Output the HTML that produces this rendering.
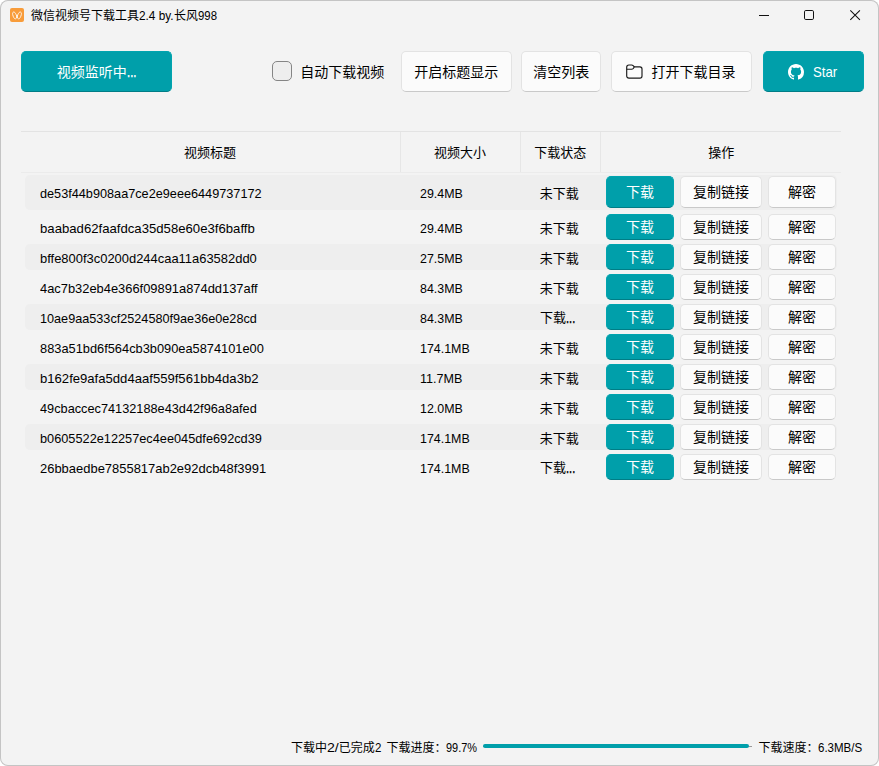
<!DOCTYPE html>
<html lang="zh-CN">
<head>
<meta charset="utf-8">
<title>微信视频号下载工具2.4 by.长风998</title>
<!-- CJK labels are real text (.c) using a Liberation Sans + Noto Sans CJK SC stack. -->
<style>
html,body{margin:0;padding:0;background:#fff}
body{width:879px;height:766px;overflow:hidden;position:relative;font-family:"Liberation Sans","Noto Sans CJK SC",sans-serif;color:#000}
.win{position:absolute;left:0;top:0;width:879px;height:765.5px;border-radius:8px;background:#f3f3f3;box-shadow:inset 0 0 0 1px #c4c4c4;overflow:hidden}
.win *{position:absolute;margin:0;padding:0;font-weight:400;font-style:normal}
.win svg *{position:static}
.g{left:0;top:0;width:0;height:0;overflow:visible}
.t{transform-origin:0 0;white-space:nowrap;line-height:16px;height:16px}
.c{font-family:"Liberation Sans","Noto Sans CJK SC",sans-serif;color:#000;overflow:visible}
.pbtn .c{color:#fff}
.btn{box-sizing:border-box;background:#fbfbfb;border:1px solid #e3e3e3;border-bottom-color:#c9c9c9;border-radius:5px}
.pbtn{box-sizing:border-box;background:#009faa;border:1px solid #00a4af;border-bottom-color:#007d86;border-radius:5px}
.chk{box-sizing:border-box;background:#eee;border:1px solid #858585;border-radius:5px}
.alt{background:#eee;border-radius:5px}
.hl{background:#e3e3e3}
.vl{background:#e6e6e6}
</style>
</head>
<body>
<div class="win">
<header class="g titlebar">
<svg class="ic" style="left:10px;top:8px" width="14" height="14" viewBox="0 0 14 14" role="img" aria-label="app icon"><rect width="14" height="14" rx="2" fill="#f89c3a"/><path d="M7 9.2C6.4 10.6 5.2 11.2 4.4 10.6C3.2 9.7 1.9 6.2 2.1 4.6C2.3 3.2 3.6 2.7 4.6 3.8C5.6 4.9 6.6 7 7 9.2C7.4 7 8.4 4.9 9.4 3.8C10.4 2.7 11.7 3.2 11.9 4.6C12.1 6.2 10.8 9.7 9.6 10.6C8.8 11.2 7.6 10.6 7 9.2Z" transform="translate(7 7.4) scale(.9) translate(-7 -7)" fill="none" stroke="#fff" stroke-width="0.95" stroke-linecap="round" stroke-linejoin="round"/><path d="M7 7.2V9" stroke="#fff" stroke-width="0.8" stroke-linecap="round"/></svg>
<h1 class="g title">
<span class="t c" style="left:31px;top:8.14px;font-size:12px;width:108px">微信视频号下载工具</span>
<span class="t" style="left:139px;top:7.5px;font-size:12.4px;transform:scaleX(0.9531);">2.4 by.</span>
<span class="t c" style="left:174px;top:8.14px;font-size:12px;width:24px">长风</span>
<span class="t" style="left:197.9px;top:7.5px;font-size:12.4px;transform:scaleX(0.9184);">998</span>
</h1>
<svg class="ic" style="left:755px;top:5px" width="110" height="20" viewBox="0 0 110 20" role="img" aria-label="minimize maximize close" fill="none" stroke="#111" stroke-width="1"><path d="M4 10.5h10"/><rect x="49.5" y="5.5" width="9" height="9" rx="1.3"/><path d="M95.3 5.3l9.6 9.6M104.9 5.3l-9.6 9.6" stroke-width="1.05"/></svg>
</header>
<div class="g toolbar">
<div class="pbtn" style="left:21px;top:51px;width:151px;height:41px;" role="button">
<span class="t c" style="left:34.8px;top:12.05px;font-size:14px;width:70px">视频监听中</span>
<span class="t" style="left:104.9px;top:11.28px;font-size:16.5px;color:#fff;-webkit-text-stroke:0.35px;transform:scaleX(0.6835);">...</span>
</div>
<label class="g check">
<span class="chk" style="left:272px;top:61px;width:20px;height:20px;" role="checkbox" aria-checked="false"></span>
<span class="t c" style="left:300.2px;top:64.45px;font-size:14px;width:84px">自动下载视频</span>
</label>
<div class="btn" style="left:401px;top:51px;width:111px;height:41px;" role="button">
<span class="t c" style="left:12.2px;top:12.05px;font-size:14px;width:84px">开启标题显示</span>
</div>
<div class="btn" style="left:521px;top:51px;width:80px;height:41px;" role="button">
<span class="t c" style="left:11.2px;top:12.05px;font-size:14px;width:56px">清空列表</span>
</div>
<div class="btn" style="left:611px;top:51px;width:141px;height:41px;" role="button">
<svg class="ic" style="left:13.5px;top:12px" width="17" height="15" viewBox="0 0 17 15" role="img" aria-label="folder" fill="none" stroke="#1a1a1a" stroke-width="1.15" stroke-linejoin="round"><path d="M0.7 3.2C0.7 1.9 1.6 1 2.9 1H5.6C6.2 1 6.7 1.2 7.1 1.6L8 2.5C8.3 2.8 8.6 2.9 9 2.9H13.9C15.1 2.9 16 3.8 16 5V12C16 13.2 15.1 14.1 13.9 14.1H2.9C1.6 14.1 0.7 13.2 0.7 12Z"/><path d="M0.7 5.2H5.6C6.2 5.2 6.7 5 7.1 4.6L8.3 3.2"/></svg>
<span class="t c" style="left:39.6px;top:12.05px;font-size:14px;width:84px">打开下载目录</span>
</div>
<div class="pbtn" style="left:763px;top:51px;width:101px;height:41px;" role="button">
<svg class="ic" style="left:24px;top:12px" width="16" height="16" viewBox="0 0 16 16" role="img" aria-label="GitHub"><path fill="#fff" d="M8 0C3.58 0 0 3.58 0 8c0 3.54 2.29 6.53 5.47 7.59.4.07.55-.17.55-.38 0-.19-.01-.82-.01-1.49-2.01.37-2.53-.49-2.69-.94-.09-.23-.48-.94-.82-1.13-.28-.15-.68-.52-.01-.53.63-.01 1.08.58 1.23.82.72 1.21 1.87.87 2.33.66.07-.52.28-.87.51-1.07-1.78-.2-3.64-.89-3.64-3.95 0-.87.31-1.59.82-2.15-.08-.2-.36-1.02.08-2.12 0 0 .67-.21 2.2.82.64-.18 1.32-.27 2-.27s1.36.09 2 .27c1.53-1.04 2.2-.82 2.2-.82.44 1.1.16 1.92.08 2.12.51.56.82 1.27.82 2.15 0 3.07-1.87 3.75-3.65 3.95.29.25.54.73.54 1.48 0 1.07-.01 1.93-.01 2.2 0 .21.15.46.55.38A8.01 8.01 0 0 0 16 8c0-4.42-3.58-8-8-8z"/></svg>
<span class="t" style="left:49.3px;top:12.38px;font-size:14.5px;color:#fff;transform:scaleX(0.9100);">Star</span>
</div>
</div>
<div class="g table" role="table">
<div class="g thead" role="row">
<i class="hl" style="left:21px;top:131px;width:820px;height:1px;"></i>
<i class="hl" style="left:21px;top:172px;width:820px;height:1px;background:#ebebeb"></i>
<i class="vl" style="left:400px;top:132px;width:1px;height:40px;"></i>
<i class="vl" style="left:520px;top:132px;width:1px;height:40px;"></i>
<i class="vl" style="left:600px;top:132px;width:1px;height:40px;"></i>
<div class="g th" role="columnheader">
<span class="t c" style="left:184px;top:145.2px;font-size:13px;width:52px">视频标题</span>
</div>
<div class="g th" role="columnheader">
<span class="t c" style="left:434px;top:145.2px;font-size:13px;width:52px">视频大小</span>
</div>
<div class="g th" role="columnheader">
<span class="t c" style="left:534.3px;top:145.2px;font-size:13px;width:52px">下载状态</span>
</div>
<div class="g th" role="columnheader">
<span class="t c" style="left:708.2px;top:145.2px;font-size:13px;width:26px">操作</span>
</div>
</div>
<div class="g row odd" role="row">
<i class="alt" style="left:25px;top:175px;width:811.5px;height:35px;"></i>
<div class="g td" role="cell">
<span class="t" style="left:40.4px;top:185.6px;font-size:12.7px;transform:scaleX(1.0001);">de53f44b908aa7ce2e9eee6449737172</span>
</div>
<div class="g td" role="cell">
<span class="t" style="left:420px;top:185.6px;font-size:12.7px;transform:scaleX(0.9779);">29.4MB</span>
</div>
<div class="g td" role="cell">
<span class="t c" style="left:539.7px;top:185.6px;font-size:13px;width:39px">未下载</span>
</div>
<div class="g td" role="cell">
<div class="pbtn" style="left:606px;top:176px;width:68px;height:32px;" role="button">
<span class="t c" style="left:19.1px;top:7.25px;font-size:14px;width:28px">下载</span>
</div>
<div class="btn" style="left:680px;top:176px;width:82px;height:32px;" role="button">
<span class="t c" style="left:12.1px;top:7.25px;font-size:14px;width:56px">复制链接</span>
</div>
<div class="btn" style="left:768px;top:176px;width:68px;height:32px;" role="button">
<span class="t c" style="left:19px;top:7.25px;font-size:14px;width:28px">解密</span>
</div>
</div>
</div>
<div class="g row" role="row">
<div class="g td" role="cell">
<span class="t" style="left:40.4px;top:220.6px;font-size:12.7px;transform:scaleX(1.0366);">baabad62faafdca35d58e60e3f6baffb</span>
</div>
<div class="g td" role="cell">
<span class="t" style="left:420px;top:220.6px;font-size:12.7px;transform:scaleX(0.9779);">29.4MB</span>
</div>
<div class="g td" role="cell">
<span class="t c" style="left:539.7px;top:220.6px;font-size:13px;width:39px">未下载</span>
</div>
<div class="g td" role="cell">
<div class="pbtn" style="left:606px;top:214px;width:68px;height:26px;" role="button">
<span class="t c" style="left:19.1px;top:4.25px;font-size:14px;width:28px">下载</span>
</div>
<div class="btn" style="left:680px;top:214px;width:82px;height:26px;" role="button">
<span class="t c" style="left:12.1px;top:4.25px;font-size:14px;width:56px">复制链接</span>
</div>
<div class="btn" style="left:768px;top:214px;width:68px;height:26px;" role="button">
<span class="t c" style="left:19px;top:4.25px;font-size:14px;width:28px">解密</span>
</div>
</div>
</div>
<div class="g row odd" role="row">
<i class="alt" style="left:25px;top:244px;width:811.5px;height:26px;"></i>
<div class="g td" role="cell">
<span class="t" style="left:40.4px;top:250.6px;font-size:12.7px;transform:scaleX(1.0196);">bffe800f3c0200d244caa11a63582dd0</span>
</div>
<div class="g td" role="cell">
<span class="t" style="left:420px;top:250.6px;font-size:12.7px;transform:scaleX(0.9779);">27.5MB</span>
</div>
<div class="g td" role="cell">
<span class="t c" style="left:539.7px;top:250.6px;font-size:13px;width:39px">未下载</span>
</div>
<div class="g td" role="cell">
<div class="pbtn" style="left:606px;top:244px;width:68px;height:26px;" role="button">
<span class="t c" style="left:19.1px;top:4.25px;font-size:14px;width:28px">下载</span>
</div>
<div class="btn" style="left:680px;top:244px;width:82px;height:26px;" role="button">
<span class="t c" style="left:12.1px;top:4.25px;font-size:14px;width:56px">复制链接</span>
</div>
<div class="btn" style="left:768px;top:244px;width:68px;height:26px;" role="button">
<span class="t c" style="left:19px;top:4.25px;font-size:14px;width:28px">解密</span>
</div>
</div>
</div>
<div class="g row" role="row">
<div class="g td" role="cell">
<span class="t" style="left:40.4px;top:280.6px;font-size:12.7px;transform:scaleX(1.0155);">4ac7b32eb4e366f09891a874dd137aff</span>
</div>
<div class="g td" role="cell">
<span class="t" style="left:420px;top:280.6px;font-size:12.7px;transform:scaleX(0.9779);">84.3MB</span>
</div>
<div class="g td" role="cell">
<span class="t c" style="left:539.7px;top:280.6px;font-size:13px;width:39px">未下载</span>
</div>
<div class="g td" role="cell">
<div class="pbtn" style="left:606px;top:274px;width:68px;height:26px;" role="button">
<span class="t c" style="left:19.1px;top:4.25px;font-size:14px;width:28px">下载</span>
</div>
<div class="btn" style="left:680px;top:274px;width:82px;height:26px;" role="button">
<span class="t c" style="left:12.1px;top:4.25px;font-size:14px;width:56px">复制链接</span>
</div>
<div class="btn" style="left:768px;top:274px;width:68px;height:26px;" role="button">
<span class="t c" style="left:19px;top:4.25px;font-size:14px;width:28px">解密</span>
</div>
</div>
</div>
<div class="g row odd" role="row">
<i class="alt" style="left:25px;top:304px;width:811.5px;height:26px;"></i>
<div class="g td" role="cell">
<span class="t" style="left:40.4px;top:310.6px;font-size:12.7px;transform:scaleX(0.9976);">10ae9aa533cf2524580f9ae36e0e28cd</span>
</div>
<div class="g td" role="cell">
<span class="t" style="left:420px;top:310.6px;font-size:12.7px;transform:scaleX(0.9779);">84.3MB</span>
</div>
<div class="g td" role="cell">
<span class="t c" style="left:540px;top:310.4px;font-size:13px;width:26px">下载</span>
<span class="t" style="left:566.2px;top:310.46px;font-size:16px;-webkit-text-stroke:0.35px;transform:scaleX(0.6899);">...</span>
</div>
<div class="g td" role="cell">
<div class="pbtn" style="left:606px;top:304px;width:68px;height:26px;" role="button">
<span class="t c" style="left:19.1px;top:4.25px;font-size:14px;width:28px">下载</span>
</div>
<div class="btn" style="left:680px;top:304px;width:82px;height:26px;" role="button">
<span class="t c" style="left:12.1px;top:4.25px;font-size:14px;width:56px">复制链接</span>
</div>
<div class="btn" style="left:768px;top:304px;width:68px;height:26px;" role="button">
<span class="t c" style="left:19px;top:4.25px;font-size:14px;width:28px">解密</span>
</div>
</div>
</div>
<div class="g row" role="row">
<div class="g td" role="cell">
<span class="t" style="left:40.4px;top:340.6px;font-size:12.7px;transform:scaleX(1.0105);">883a51bd6f564cb3b090ea5874101e00</span>
</div>
<div class="g td" role="cell">
<span class="t" style="left:420px;top:340.6px;font-size:12.7px;transform:scaleX(0.9797);">174.1MB</span>
</div>
<div class="g td" role="cell">
<span class="t c" style="left:539.7px;top:340.6px;font-size:13px;width:39px">未下载</span>
</div>
<div class="g td" role="cell">
<div class="pbtn" style="left:606px;top:334px;width:68px;height:26px;" role="button">
<span class="t c" style="left:19.1px;top:4.25px;font-size:14px;width:28px">下载</span>
</div>
<div class="btn" style="left:680px;top:334px;width:82px;height:26px;" role="button">
<span class="t c" style="left:12.1px;top:4.25px;font-size:14px;width:56px">复制链接</span>
</div>
<div class="btn" style="left:768px;top:334px;width:68px;height:26px;" role="button">
<span class="t c" style="left:19px;top:4.25px;font-size:14px;width:28px">解密</span>
</div>
</div>
</div>
<div class="g row odd" role="row">
<i class="alt" style="left:25px;top:364px;width:811.5px;height:26px;"></i>
<div class="g td" role="cell">
<span class="t" style="left:40.4px;top:370.6px;font-size:12.7px;transform:scaleX(1.0322);">b162fe9afa5dd4aaf559f561bb4da3b2</span>
</div>
<div class="g td" role="cell">
<span class="t" style="left:420px;top:370.6px;font-size:12.7px;transform:scaleX(0.9901);">11.7MB</span>
</div>
<div class="g td" role="cell">
<span class="t c" style="left:539.7px;top:370.6px;font-size:13px;width:39px">未下载</span>
</div>
<div class="g td" role="cell">
<div class="pbtn" style="left:606px;top:364px;width:68px;height:26px;" role="button">
<span class="t c" style="left:19.1px;top:4.25px;font-size:14px;width:28px">下载</span>
</div>
<div class="btn" style="left:680px;top:364px;width:82px;height:26px;" role="button">
<span class="t c" style="left:12.1px;top:4.25px;font-size:14px;width:56px">复制链接</span>
</div>
<div class="btn" style="left:768px;top:364px;width:68px;height:26px;" role="button">
<span class="t c" style="left:19px;top:4.25px;font-size:14px;width:28px">解密</span>
</div>
</div>
</div>
<div class="g row" role="row">
<div class="g td" role="cell">
<span class="t" style="left:40.4px;top:400.6px;font-size:12.7px;transform:scaleX(1.0042);">49cbaccec74132188e43d42f96a8afed</span>
</div>
<div class="g td" role="cell">
<span class="t" style="left:420px;top:400.6px;font-size:12.7px;transform:scaleX(0.9779);">12.0MB</span>
</div>
<div class="g td" role="cell">
<span class="t c" style="left:539.7px;top:400.6px;font-size:13px;width:39px">未下载</span>
</div>
<div class="g td" role="cell">
<div class="pbtn" style="left:606px;top:394px;width:68px;height:26px;" role="button">
<span class="t c" style="left:19.1px;top:4.25px;font-size:14px;width:28px">下载</span>
</div>
<div class="btn" style="left:680px;top:394px;width:82px;height:26px;" role="button">
<span class="t c" style="left:12.1px;top:4.25px;font-size:14px;width:56px">复制链接</span>
</div>
<div class="btn" style="left:768px;top:394px;width:68px;height:26px;" role="button">
<span class="t c" style="left:19px;top:4.25px;font-size:14px;width:28px">解密</span>
</div>
</div>
</div>
<div class="g row odd" role="row">
<i class="alt" style="left:25px;top:424px;width:811.5px;height:26px;"></i>
<div class="g td" role="cell">
<span class="t" style="left:40.4px;top:430.6px;font-size:12.7px;transform:scaleX(1.0047);">b0605522e12257ec4ee045dfe692cd39</span>
</div>
<div class="g td" role="cell">
<span class="t" style="left:420px;top:430.6px;font-size:12.7px;transform:scaleX(0.9797);">174.1MB</span>
</div>
<div class="g td" role="cell">
<span class="t c" style="left:539.7px;top:430.6px;font-size:13px;width:39px">未下载</span>
</div>
<div class="g td" role="cell">
<div class="pbtn" style="left:606px;top:424px;width:68px;height:26px;" role="button">
<span class="t c" style="left:19.1px;top:4.25px;font-size:14px;width:28px">下载</span>
</div>
<div class="btn" style="left:680px;top:424px;width:82px;height:26px;" role="button">
<span class="t c" style="left:12.1px;top:4.25px;font-size:14px;width:56px">复制链接</span>
</div>
<div class="btn" style="left:768px;top:424px;width:68px;height:26px;" role="button">
<span class="t c" style="left:19px;top:4.25px;font-size:14px;width:28px">解密</span>
</div>
</div>
</div>
<div class="g row" role="row">
<div class="g td" role="cell">
<span class="t" style="left:40.4px;top:460.6px;font-size:12.7px;transform:scaleX(1.0209);">26bbaedbe7855817ab2e92dcb48f3991</span>
</div>
<div class="g td" role="cell">
<span class="t" style="left:420px;top:460.6px;font-size:12.7px;transform:scaleX(0.9797);">174.1MB</span>
</div>
<div class="g td" role="cell">
<span class="t c" style="left:540px;top:460.4px;font-size:13px;width:26px">下载</span>
<span class="t" style="left:566.2px;top:460.46px;font-size:16px;-webkit-text-stroke:0.35px;transform:scaleX(0.6899);">...</span>
</div>
<div class="g td" role="cell">
<div class="pbtn" style="left:606px;top:454px;width:68px;height:26px;" role="button">
<span class="t c" style="left:19.1px;top:4.25px;font-size:14px;width:28px">下载</span>
</div>
<div class="btn" style="left:680px;top:454px;width:82px;height:26px;" role="button">
<span class="t c" style="left:12.1px;top:4.25px;font-size:14px;width:56px">复制链接</span>
</div>
<div class="btn" style="left:768px;top:454px;width:68px;height:26px;" role="button">
<span class="t c" style="left:19px;top:4.25px;font-size:14px;width:28px">解密</span>
</div>
</div>
</div>
</div>
<footer class="g status">
<span class="g">
<span class="t c" style="left:291px;top:739.84px;font-size:12px;width:36px">下载中</span>
<span class="t" style="left:327px;top:739.5px;font-size:12.4px;transform:scaleX(1.1410);">2/</span>
<span class="t c" style="left:338.8px;top:739.84px;font-size:12px;width:36px">已完成</span>
<span class="t" style="left:374.5px;top:739.5px;font-size:12.4px;transform:scaleX(0.9280);">2</span>
</span>
<span class="g">
<span class="t c" style="left:386.6px;top:739.84px;font-size:12px;width:60px">下载进度：</span>
<span class="t" style="left:445.8px;top:739.5px;font-size:12.4px;transform:scaleX(0.8817);">99.7%</span>
</span>
<div class="g progress" role="progressbar" aria-valuenow="99.7" aria-valuemin="0" aria-valuemax="100">
<i class="" style="left:483px;top:745.5px;width:269px;height:1px;background:#9a9a9a"></i>
<i class="" style="left:483px;top:744px;width:266px;height:4px;border-radius:2px;background:#009faa"></i>
</div>
<span class="g">
<span class="t c" style="left:758.4px;top:739.84px;font-size:12px;width:60px">下载速度：</span>
<span class="t" style="left:817.6px;top:739.5px;font-size:12.4px;transform:scaleX(0.9295);">6.3MB/S</span>
</span>
</footer>
</div>
</body>
</html>
